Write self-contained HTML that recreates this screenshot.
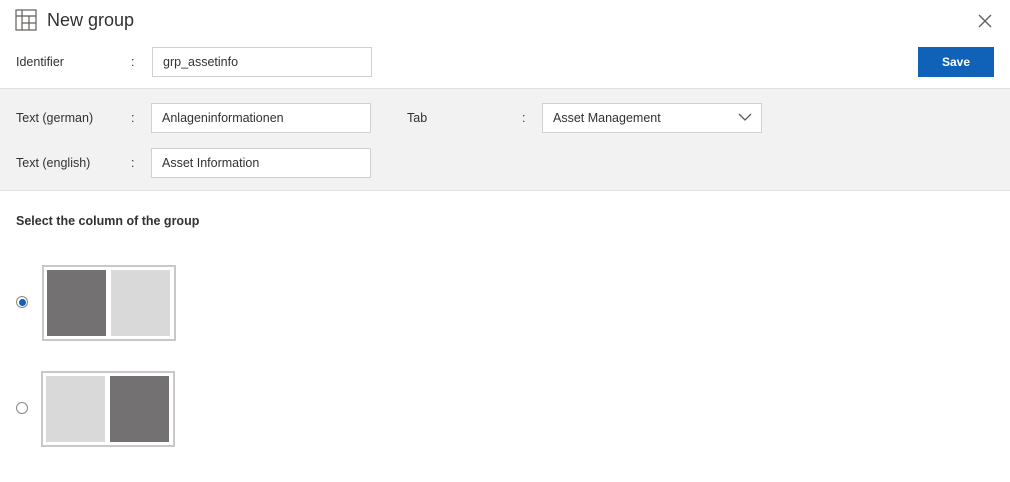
<!DOCTYPE html><html><head><style>
body{margin:0;width:1010px;height:482px;background:#fff;font-family:"Liberation Sans",sans-serif;color:#323130;position:relative;overflow:hidden}
.a{position:absolute}
.l{font-size:12.5px;color:#323130}
.in{position:absolute;background:#fff;border:1px solid #d2d0ce;box-sizing:border-box;height:30px;font-size:12.5px;padding:7px 10px;color:#323130}
.box{position:absolute;width:134px;height:76px;border:2px solid #c8c8c8;box-sizing:border-box;background:#fff}
.d{position:absolute;top:3px;width:59px;height:66px;background:#737171}
.g{position:absolute;top:3px;width:59px;height:66px;background:#d9d9d9}
</style></head><body>
<svg class="a" style="left:15px;top:9px" width="22" height="22" viewBox="0 0 22 22" fill="none" stroke="#605e5c" stroke-width="1.2"><rect x="1" y="1" width="20" height="20"/><line x1="1" y1="7" x2="21" y2="7"/><line x1="7" y1="1" x2="7" y2="21"/><line x1="7" y1="14" x2="21" y2="14"/><line x1="14" y1="7" x2="14" y2="21"/></svg>
<div class="a" style="left:47px;top:10px;font-size:18px;color:#323130">New group</div>
<svg class="a" style="left:978px;top:14px" width="14" height="14" viewBox="0 0 14 14" stroke="#605e5c" stroke-width="1.3"><line x1="1" y1="1" x2="13" y2="13"/><line x1="13" y1="1" x2="1" y2="13"/></svg>
<div class="a l" style="left:16px;top:55px">Identifier</div><div class="a l" style="left:131px;top:55px">:</div>
<div class="in" style="left:152px;top:47px;width:220px">grp_assetinfo</div>
<div class="a" style="left:918px;top:47px;width:76px;height:30px;background:#0f62b8;color:#fff;font-size:12px;font-weight:bold;text-align:center;line-height:30px">Save</div>
<div class="a" style="left:0;top:88px;width:1010px;height:103px;background:#f2f2f2;border-top:1px solid #e1e1e1;border-bottom:1px solid #e1e1e1;box-sizing:border-box"></div>
<div class="a l" style="left:16px;top:111px">Text (german)</div><div class="a l" style="left:131px;top:111px">:</div>
<div class="in" style="left:151px;top:103px;width:220px">Anlageninformationen</div>
<div class="a l" style="left:407px;top:111px">Tab</div><div class="a l" style="left:522px;top:111px">:</div>
<div class="in" style="left:542px;top:103px;width:220px">Asset Management</div>
<svg class="a" style="left:738px;top:113px" width="14" height="9" viewBox="0 0 14 9" fill="none" stroke="#605e5c" stroke-width="1.3"><polyline points="1,1 7,7 13,1"/></svg>
<div class="a l" style="left:16px;top:156px">Text (english)</div><div class="a l" style="left:131px;top:156px">:</div>
<div class="in" style="left:151px;top:148px;width:220px">Asset Information</div>
<div class="a" style="left:16px;top:214px;font-size:12.5px;font-weight:bold;color:#323130">Select the column of the group</div>
<div class="a" style="left:16px;top:296px;width:12px;height:12px;border:1px solid #8a8886;border-radius:50%;box-sizing:border-box;background:#fff"><div style="margin:1.5px;width:7px;height:7px;border-radius:50%;background:#0f62b8"></div></div>
<div class="a" style="left:16px;top:402px;width:12px;height:12px;border:1px solid #8a8886;border-radius:50%;box-sizing:border-box;background:#fff"></div>
<div class="box" style="left:42px;top:265px"><div class="d" style="left:3px"></div><div class="g" style="left:67px"></div></div>
<div class="box" style="left:41px;top:371px"><div class="g" style="left:3px"></div><div class="d" style="left:67px"></div></div>
</body></html>
